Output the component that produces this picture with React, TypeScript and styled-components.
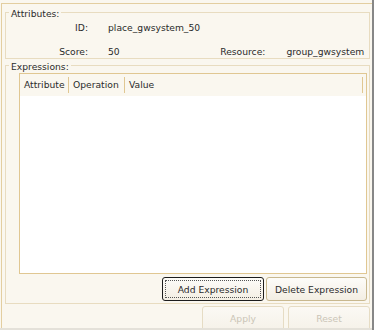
import React from 'react';
import styled, { createGlobalStyle } from 'styled-components';

const GlobalStyle = createGlobalStyle`
  html, body {
    margin: 0;
    padding: 0;
    background: #faf7ef;
  }
  body {
    font-family: "DejaVu Sans", "Liberation Sans", sans-serif;
    font-size: 9.2px;
    color: #2b2b2b;
  }
`;

const Screen = styled.div`
  width: 374px;
  height: 330px;
  box-sizing: border-box;
  padding-top: 3px;
  border-right: 2px solid #878787;
  background: #faf7ef;
  overflow: hidden;
  position: relative;
  &::after {
    content: '';
    position: absolute;
    left: 0;
    right: 0;
    top: 328px;
    height: 2px;
    background: #e4e1d9;
  }
`;

const Window = styled.div`
  box-sizing: border-box;
  height: 325px;
  margin-left: 1px;
  padding: 8px 2px 0 3px;
  border-top: 1px solid #e3cea0;
  border-left: 1px solid #e3cea0;
  display: flex;
  flex-direction: column;
`;

const Group = styled.div<{ $grow?: boolean }>`
  position: relative;
  border: 1px solid #e8dcc0;
  display: flex;
  flex-direction: column;
  flex: ${(p) => (p.$grow ? '1' : 'none')};
  & + & {
    margin-top: 6px;
  }
`;

const Caption = styled.span`
  position: absolute;
  top: -5px;
  left: 3px;
  padding: 0 2px;
  line-height: 11px;
  background: #faf7ef;
`;

const AttrGrid = styled.div`
  display: grid;
  grid-template-columns: 82px 1fr auto auto;
  column-gap: 20px;
  row-gap: 13px;
  padding: 9px 6px 1px 0;
  line-height: 11px;
`;

const Label = styled.span`
  text-align: right;
`;

const Value = styled.span<{ $gap?: number }>`
  margin-left: ${(p) => p.$gap ?? 0}px;
`;

const ExprBody = styled.div`
  flex: 1;
  display: flex;
  flex-direction: column;
  padding: 7px 2px 2px 13px;
`;

const Table = styled.div`
  flex: 1;
  display: flex;
  flex-direction: column;
  border: 1px solid #e0c792;
  background: #ffffff;
`;

const HeaderRow = styled.div`
  display: flex;
  height: 22px;
  background: #faf7ef;
`;

const HeaderCell = styled.div<{ $width?: number }>`
  box-sizing: border-box;
  width: ${(p) => (p.$width ? `${p.$width}px` : 'auto')};
  flex: ${(p) => (p.$width ? 'none' : '1')};
  height: 16px;
  margin-top: 3px;
  padding-left: 4px;
  line-height: 16px;
  border-right: 1px solid #e0c792;
`;

const HeaderFill = styled.div`
  width: 3px;
`;

const Actions = styled.div`
  display: flex;
  justify-content: flex-end;
  gap: 2px;
  margin-top: 3px;
`;

const Button = styled.button<{ $focused?: boolean }>`
  box-sizing: border-box;
  width: ${(p) => (p.$focused ? 102 : 101)}px;
  height: 24px;
  padding: 0;
  font: inherit;
  color: #2b2b2b;
  border: 1px solid ${(p) => (p.$focused ? '#1c1c1c' : '#c8b88f')};
  border-radius: 3px;
  background: linear-gradient(#fdfcf9, #f3eee3);
  outline: ${(p) => (p.$focused ? '1px dotted #555' : 'none')};
  outline-offset: -4px;
`;

const Footer = styled.div`
  flex: none;
  height: 22px;
  display: flex;
  justify-content: flex-end;
  gap: 4px;
  margin-top: 2px;
`;

const FooterButton = styled.button`
  flex: none;
  box-sizing: border-box;
  width: 82px;
  height: 26px;
  padding: 0 0 2px;
  font: inherit;
  color: #cbc5b7;
  border: 1px solid #e6dcc4;
  border-radius: 3px;
  background: linear-gradient(#fbf9f4, #f5f1e8);
`;

export default function App() {
  return (
    <>
      <GlobalStyle />
      <Screen>
        <Window>
          <Group>
            <Caption>Attributes:</Caption>
            <AttrGrid>
              <Label>ID:</Label>
              <Value>place_gwsystem_50</Value>
              <span />
              <span />
              <Label>Score:</Label>
              <Value>50</Value>
              <Label>Resource:</Label>
              <Value $gap={1}>group_gwsystem</Value>
            </AttrGrid>
          </Group>
          <Group $grow>
            <Caption>Expressions:</Caption>
            <ExprBody>
              <Table>
                <HeaderRow>
                  <HeaderCell $width={49}>Attribute</HeaderCell>
                  <HeaderCell $width={56}>Operation</HeaderCell>
                  <HeaderCell>Value</HeaderCell>
                  <HeaderFill />
                </HeaderRow>
              </Table>
              <Actions>
                <Button $focused>Add Expression</Button>
                <Button>Delete Expression</Button>
              </Actions>
            </ExprBody>
          </Group>
          <Footer>
            <FooterButton disabled>Apply</FooterButton>
            <FooterButton disabled>Reset</FooterButton>
          </Footer>
        </Window>
      </Screen>
    </>
  );
}
